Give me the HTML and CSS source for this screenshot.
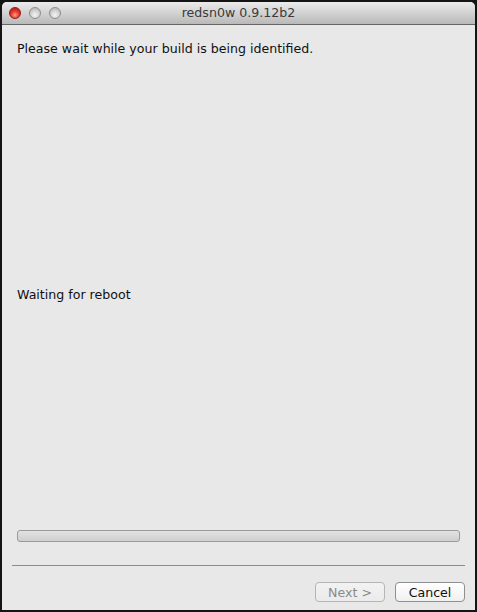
FILE: index.html
```html
<!DOCTYPE html>
<html>
<head>
<meta charset="utf-8">
<link rel="stylesheet" href="styles.css">
</head>
<body>
<div class="window">
  <div class="titlebar">
    <div class="lights">
      <span class="light close"></span>
      <span class="light"></span>
      <span class="light"></span>
    </div>
    <div class="title">redsn0w 0.9.12b2</div>
  </div>
  <div class="content">
    <p class="msg">Please wait while your build is being identified.</p>
    <p class="status">Waiting for reboot</p>
    <div class="progress"></div>
    <div class="sep"></div>
    <div class="buttons">
      <button class="btn disabled">Next &gt;</button>
      <button class="btn">Cancel</button>
    </div>
  </div>
</div>
</body>
</html>
```
FILE: styles.css
```css
html, body {
  margin: 0;
  padding: 0;
  background: #141414;
  width: 477px;
  height: 612px;
  overflow: hidden;
}
body {
  padding: 2px 2px 0 2px;
  box-sizing: border-box;
  font-family: "DejaVu Sans", sans-serif;
}
.window {
  width: 473px;
  height: 608px;
  background: #e8e8e8;
  border-radius: 5px 5px 0 0;
  display: flex;
  flex-direction: column;
  overflow: hidden;
}
.titlebar {
  height: 22px;
  flex: none;
  background: linear-gradient(#ebebeb, #b9b9b9);
  border-bottom: 1px solid #666;
  position: relative;
  display: flex;
  align-items: center;
}
.lights {
  display: flex;
  gap: 8px;
  padding-left: 7px;
}
.light {
  width: 12px;
  height: 12px;
  border-radius: 50%;
  box-sizing: border-box;
  border: 1px solid #8d8d8d;
  background: radial-gradient(circle at 50% 70%, #f4f4f4 0%, #d6d6d6 45%, #a9a9a9 100%);
}
.light.close {
  border-color: #8a1d14;
  background: radial-gradient(circle at 50% 70%, #ff9a8a 0%, #e8392c 45%, #a4150c 100%);
}
.title {
  position: absolute;
  left: 0;
  right: 0;
  top: 0;
  height: 22px;
  line-height: 22px;
  text-align: center;
  font-size: 12.6px;
  color: #3a3a3a;
}
.content {
  flex: 1;
  display: flex;
  flex-direction: column;
  padding: 0 10px 0 15px;
  font-size: 12.6px;
  color: #111;
}
.msg {
  margin: 17px 0 0 0;
  line-height: 14px;
}
.status {
  margin: 232px 0 0 0;
  line-height: 14px;
}
.progress {
  margin-top: 228px;
  width: 443px;
  height: 12px;
  box-sizing: border-box;
  border: 1px solid #9a9a9a;
  border-radius: 3px;
  background: linear-gradient(#e2e2e2, #cfcfcf);
}
.sep {
  margin: 23px 0 0 -5px;
  width: 453px;
  height: 1px;
  background: #8c8c8c;
}
.buttons {
  display: flex;
  justify-content: flex-end;
  gap: 10px;
  margin-top: 16px;
  padding-right: 0;
}
.btn {
  font-family: "DejaVu Sans", sans-serif;
  font-size: 12.6px;
  height: 20px;
  padding: 0;
  border: 1px solid #8f8f8f;
  border-radius: 4px;
  background: linear-gradient(#ffffff, #f0f0f0);
  color: #111;
  width: 70px;
}
.btn.disabled {
  color: #8a8a8a;
  border-color: #b5b5b5;
  background: linear-gradient(#f2f2f2, #ebebeb);
}
```
